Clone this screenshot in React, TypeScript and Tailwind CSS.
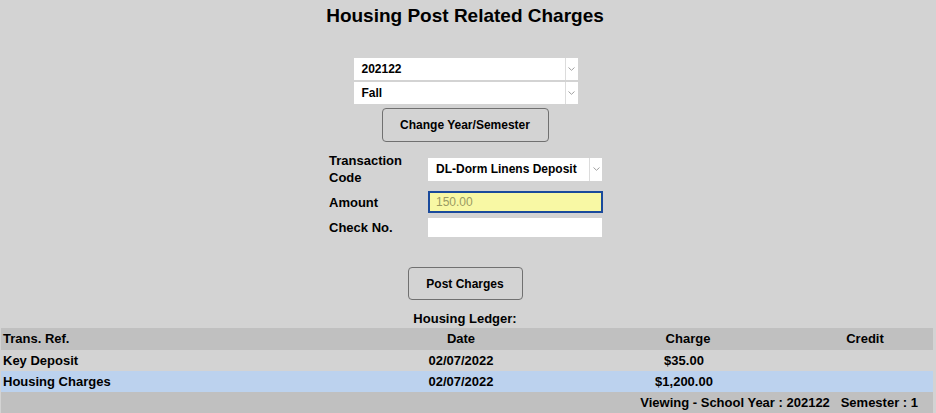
const font = { fontFamily: '"Liberation Sans", Arial, sans-serif' };

function Chevron() {
  return (
    <svg width="7" height="4" viewBox="0 0 7 4" className="text-[#a0a0a0]">
      <path d="M0.5 0.5 L3.5 3.3 L6.5 0.5" fill="none" stroke="currentColor" strokeWidth="1" />
    </svg>
  );
}

function FakeSelect({ value, className }: { value: string; className: string }) {
  return (
    <div className={`flex bg-white ${className}`}>
      <div className="flex flex-1 items-center pl-2 text-[12px] font-bold text-black">{value}</div>
      <div className="flex w-[13px] items-center justify-center border-l border-[#dcdcdc]">
        <Chevron />
      </div>
    </div>
  );
}

const rows = [
  { ref: "Key Deposit", date: "02/07/2022", charge: "$35.00", credit: "", bg: "bg-[#d3d3d3]" },
  { ref: "Housing Charges", date: "02/07/2022", charge: "$1,200.00", credit: "", bg: "bg-[#bcd2ee]" },
];

export default function App() {
  return (
    <div className="min-h-[413px] w-[936px] bg-[#d3d3d3] text-black" style={font}>
      <div className="flex flex-col items-center pr-[6px]">
        <h1 className="mt-[5px] text-[19px] font-bold leading-[22px]">Housing Post Related Charges</h1>

        <FakeSelect value="202122" className="ml-[1px] mt-[31px] h-[22px] w-[224px]" />
        <FakeSelect value="Fall" className="ml-[1px] mt-[2px] h-[22px] w-[224px]" />

        <button className="mt-[4px] h-[34px] w-[167px] rounded-[4px] border border-[#707070] bg-[#d3d3d3] text-[12px] font-bold">
          Change Year/Semester
        </button>

        <div className="ml-[2px] mt-[10px] grid w-[274px] grid-cols-[99px_1fr] items-center gap-y-[5px] text-[13px] font-bold">
          <div className="leading-[17px]">
            Transaction
            <br />
            Code
          </div>
          <FakeSelect value="DL-Dorm Linens Deposit" className="h-[23px] w-[174px]" />
          <div className="leading-[17px]">Amount</div>
          <div className="flex h-[22px] w-[175px] items-center border-2 border-[#1a4a9c] bg-[#f8f8a4] pl-[6px] text-[12px] font-normal text-[#9a9a62]">
            150.00
          </div>
          <div className="leading-[17px]">Check No.</div>
          <div className="h-[19px] w-[174px] bg-white" />
        </div>

        <button className="mt-[30px] h-[33px] w-[115px] rounded-[4px] border border-[#707070] bg-[#d3d3d3] text-[12px] font-bold">
          Post Charges
        </button>

        <div className="mt-[11px] text-[13px] font-bold leading-[16px]">Housing Ledger:</div>
      </div>

      <div className="ml-[1px] mt-[1px] w-[932px] text-[13px] font-bold">
        <div className="grid h-[22px] grid-cols-[342px_236px_218px_1fr] items-center bg-[#c0c0c0]">
          <div className="pl-[2px]">Trans. Ref.</div>
          <div className="text-center">Date</div>
          <div className="text-center">Charge</div>
          <div className="text-center">Credit</div>
        </div>
        {rows.map((r) => (
          <div key={r.ref} className={`grid h-[21px] grid-cols-[342px_236px_218px_1fr] items-center ${r.bg}`}>
            <div className="pl-[2px]">{r.ref}</div>
            <div className="text-center">{r.date}</div>
            <div className="pr-[8px] text-center">{r.charge}</div>
            <div className="text-center">{r.credit}</div>
          </div>
        ))}
        <div className="flex h-[21px] items-center justify-end bg-[#c0c0c0] pr-[15px]">
          Viewing - School Year : 202122&nbsp;&nbsp; Semester : 1
        </div>
      </div>
    </div>
  );
}
